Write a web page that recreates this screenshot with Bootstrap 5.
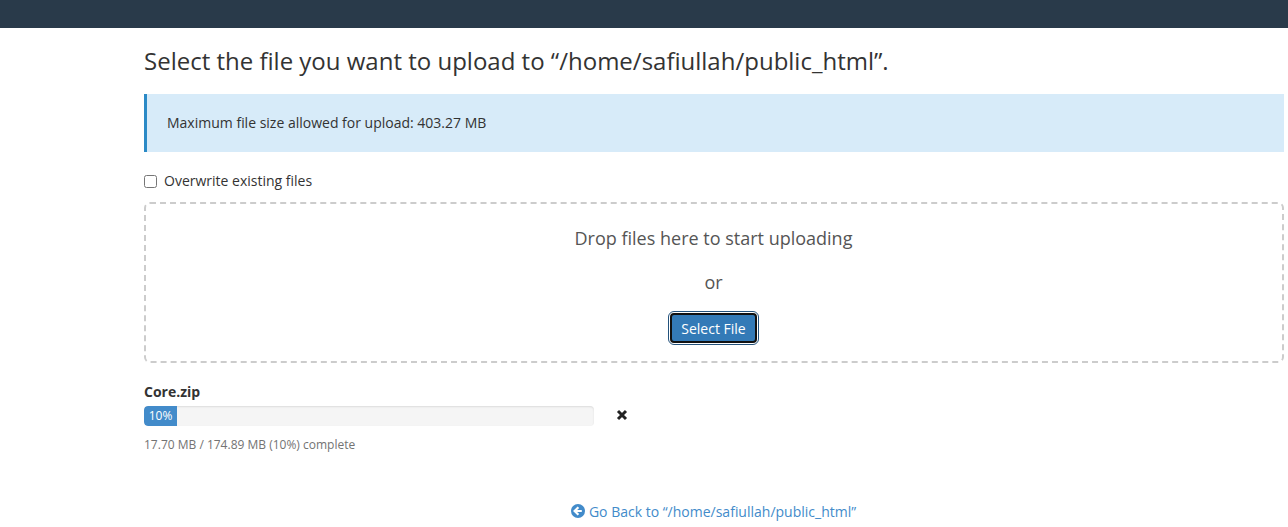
<!DOCTYPE html>
<html lang="en">
<head>
<meta charset="utf-8">
<title>Upload</title>
<link href="https://cdn.jsdelivr.net/npm/bootstrap@5.3.0/dist/css/bootstrap.min.css" rel="stylesheet">
<style>
html,body{height:527px;overflow:hidden}
body{font-family:"Open Sans",sans-serif;font-size:14px;line-height:20px;color:#333;background:#fff}
.topbar{height:28px;background:#293a4a}
.pagewrap{padding:0 4px 0 144px}
.pagehead{font-size:24px;line-height:34px;font-weight:400;color:#333;padding-top:16px;margin:0 0 16px}
.infobox{height:58px;background:#d7ebf9;border-left:3px solid #2b8ac6;padding-left:20px;color:#333;font-size:14px;margin-bottom:19px}
.overwrite{height:20px;margin-bottom:11px;gap:7px}
.overwrite input{width:13px;height:13px;margin:0;accent-color:#333}
.dropzone{height:161px;border:2px dashed #ccc;border-radius:6px;text-align:center;font-size:18px;line-height:24px;color:#555;padding-top:22px;padding-right:1px}
.dropzone p{margin:0 0 20px}
.selectbtn{font-size:14px;line-height:20px;color:#fff;background:#337ab7;border:2px solid #111;border-radius:4px;padding:2px 0 0;outline:1px solid #23527c;outline-offset:1px;width:87px;height:30px;white-space:nowrap;display:block;margin:-1px auto 0}
.filename{font-weight:700;color:#333;margin-top:19px;line-height:20px}
.uploadrow{margin-top:4px;gap:22px}
.barbox{width:450px;height:20px;background:#f5f5f5;border-radius:4px;box-shadow:inset 0 1px 2px rgba(0,0,0,.1)}
.barfill{background:#428bca;color:#fff;font-size:12px;line-height:20px;text-align:center;border-radius:4px 0 0 4px}
.cancelx{width:12px;height:12px;color:#222;margin-top:-2px}
.statline{font-size:12px;line-height:18px;color:#737373;margin-top:10px}
.backline{margin-top:48px;text-align:center;line-height:20px}
.backline a{color:#428bca;text-decoration:none}
.backline svg{width:14px;height:14px;vertical-align:-1px;margin:0 4px 0 -1px}
</style>
</head>
<body>
<div class="topbar"></div>
<div class="pagewrap">
  <h1 class="pagehead">Select the file you want to upload to “/home/safiullah/public_html”.</h1>
  <div class="infobox d-flex align-items-center">Maximum file size allowed for upload: 403.27 MB</div>
  <label class="overwrite d-flex align-items-center"><input type="checkbox"><span>Overwrite existing files</span></label>
  <div class="dropzone">
    <p>Drop files here to start uploading</p>
    <p>or</p>
    <button type="button" class="btn selectbtn">Select File</button>
  </div>
  <div class="filename">Core.zip</div>
  <div class="uploadrow d-flex align-items-center">
    <div class="barbox progress"><div class="barfill progress-bar" style="width:33px">10%</div></div>
    <svg class="cancelx" viewBox="0 0 12 12" aria-hidden="true"><path d="M2 2L10 10M10 2L2 10" stroke="currentColor" stroke-width="3" fill="none"/></svg>
  </div>
  <div class="statline">17.70 MB / 174.89 MB (10%) complete</div>
  <div class="backline"><a href="#"><svg viewBox="0 0 14 14" aria-hidden="true"><circle cx="7" cy="7" r="7" fill="#428bca"/><path d="M7.4 3.2L3.6 7l3.8 3.8M4 7h6.8" stroke="#fff" stroke-width="2.2" fill="none"/></svg>Go Back to “/home/safiullah/public_html”</a></div>
</div>
<script src="https://cdn.jsdelivr.net/npm/bootstrap@5.3.0/dist/js/bootstrap.bundle.min.js"></script>
</body>
</html>
